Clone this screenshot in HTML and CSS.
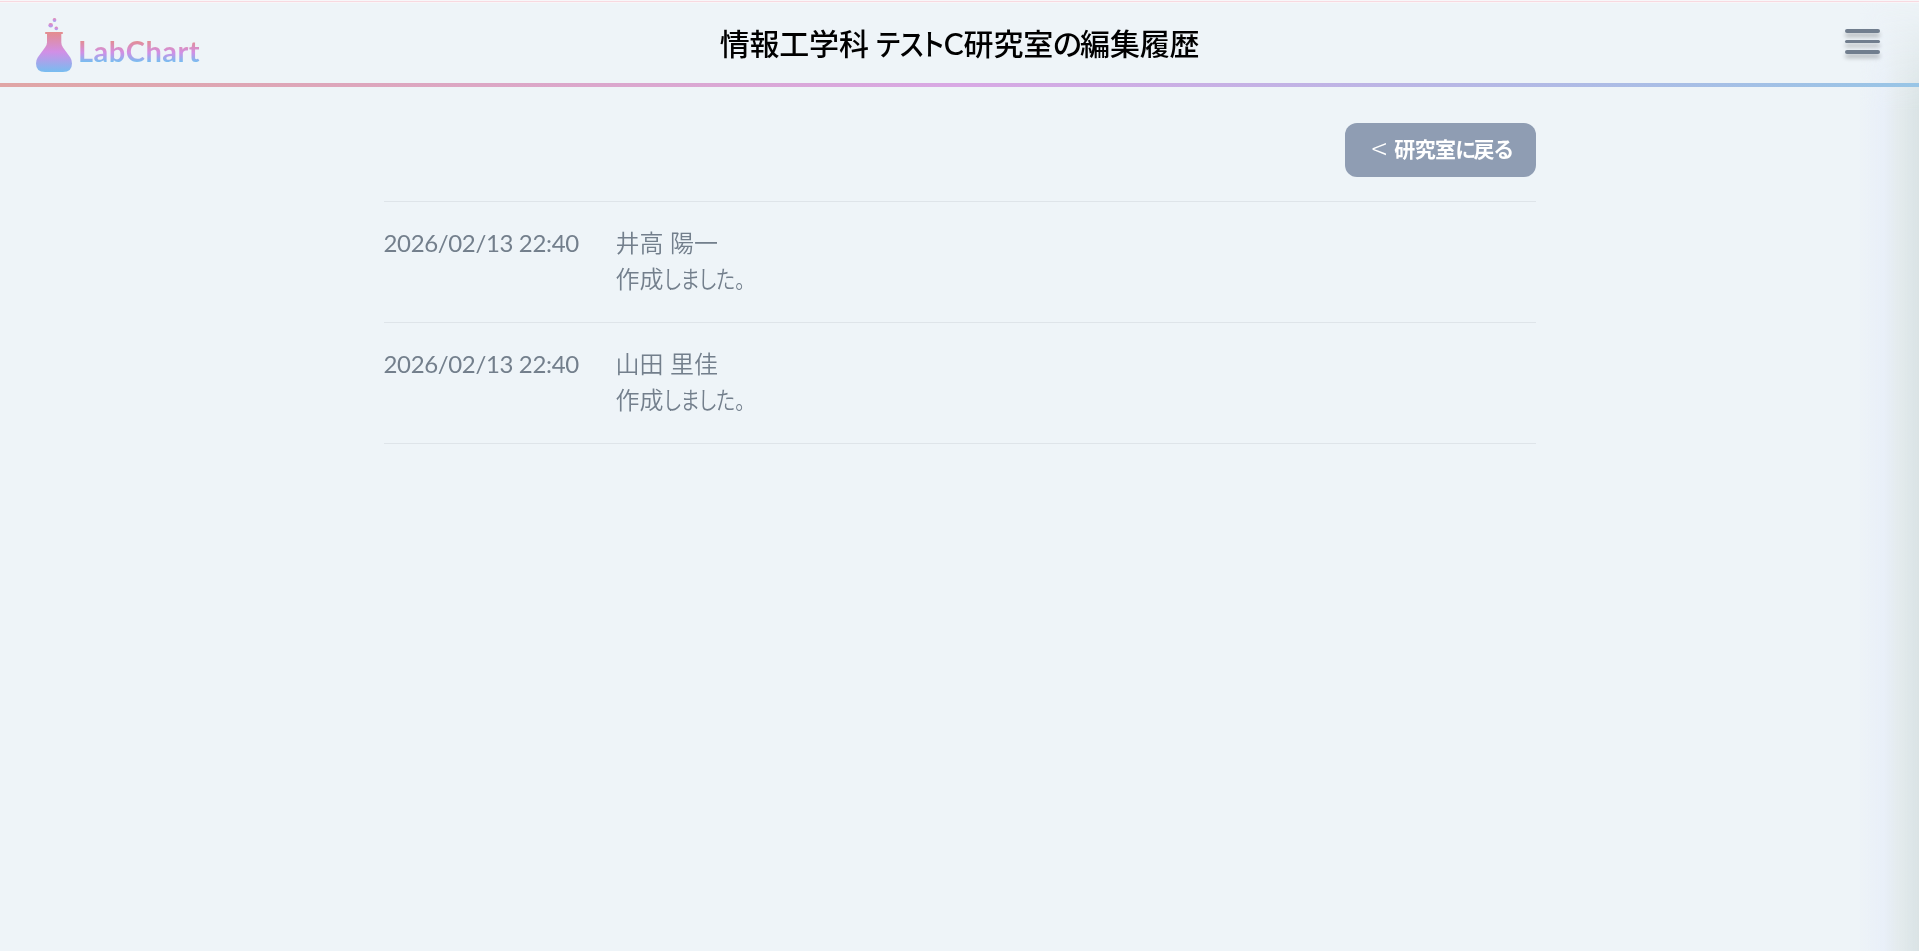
FILE: index.html
```html
<!DOCTYPE html>
<html lang="ja">
<head>
  <meta charset="UTF-8" />
  <meta name="viewport" content="width=device-width, initial-scale=1.0"/>
  <title>編集履歴 - LabChart</title>
  <link rel="stylesheet" href="styles.css">
</head>
<body>

<header class="header">
  <a class="logo" href="#">
    <svg class="logo-mark" viewBox="0 0 36 54" width="36" height="54">
      <defs>
        <linearGradient id="flask" x1="0" y1="0" x2="0" y2="1">
          <stop offset="0" stop-color="#e48d8d"/>
          <stop offset="0.5" stop-color="#d18fe6"/>
          <stop offset="1" stop-color="#77bdf0"/>
        </linearGradient>
        <linearGradient id="bubble" x1="0" y1="0" x2="0" y2="1">
          <stop offset="0" stop-color="#df8da8"/>
          <stop offset="0.5" stop-color="#cf8fe2"/>
          <stop offset="1" stop-color="#9da9ed"/>
        </linearGradient>
      </defs>
      <circle cx="18.5" cy="2" r="1.9" fill="url(#bubble)"/>
      <circle cx="14.7" cy="7.3" r="2.3" fill="url(#bubble)"/>
      <circle cx="20.3" cy="10.4" r="1.8" fill="url(#bubble)"/>
      <path fill="url(#flask)" d="M9.8 14H26.2Q27 14 27 15T26.2 16H25.3V24.5Q25.3 27 27 29.5L34.3 39.5Q36 42 36 45.5Q36 54 27 54H9Q0 54 0 45.5Q0 42 1.7 39.5L9 29.5Q11 27 11 24.5V16H9.8Q9 16 9 15T9.8 14Z"/>
    </svg>
    <span class="logo-text">LabChart</span>
  </a>
  <h1 class="title">情報工学科 <span class="katakana">テスト</span>C研究室<span class="kana">の</span>編集履歴</h1>
  <button class="menu-button" type="button" aria-label="メニュー">
    <span class="bar"></span>
    <span class="bar"></span>
    <span class="bar"></span>
  </button>
</header>

<main class="container">
  <div class="actions">
    <a class="back-button" href="#"><span class="arrow">&lt;</span><span>研究室<span class="kana">に</span>戻る</span></a>
  </div>
  <ul class="history">
    <li class="history-item">
      <time class="date">2026/02/13 22:40</time>
      <div class="detail">
        <p>井高 陽一</p>
        <p>作成<span class="kana">しました。</span></p>
      </div>
    </li>
    <li class="history-item">
      <time class="date">2026/02/13 22:40</time>
      <div class="detail">
        <p>山田 里佳</p>
        <p>作成<span class="kana">しました。</span></p>
      </div>
    </li>
  </ul>
</main>

<!-- closed drawer, only its shadow shows -->
<div class="drawer-shadow"></div>

</body>
</html>
```

FILE: styles.css
```css
* {
  box-sizing: border-box;
}
body {
  font-family: Lato, "Noto Sans CJK JP", sans-serif;
  background-color: #eef4f8;
  color: #737f8c;
  margin: 0;
  min-height: 100vh;
  overflow: hidden;
}
h1, p, ul {
  margin: 0;
  padding: 0;
}
a {
  text-decoration: none;
}
.header {
  display: grid;
  grid-template-columns: 1fr auto 1fr;
  align-items: start;
  height: 87px;
  padding: 0 36px;
  background:
    linear-gradient(#f8f6f9 1px, #f8d9e0 1px 2px, #f8f6f9 2px) top / 100% 3px no-repeat,
    linear-gradient(to right, #e0a5a5, #d8a8e4 50%, #98c5e6) bottom / 100% 4px no-repeat;
}
.logo {
  display: flex;
  align-items: flex-start;
  gap: 6px;
  padding-top: 18px;
}
.logo-text {
  margin-top: 16px;
  font-size: 29px;
  font-weight: 700;
  line-height: 34px;
  letter-spacing: 0.5px;
  background: linear-gradient(#e48d8d 18%, #d18fe6 55%, #77bdf0 82%);
  -webkit-background-clip: text;
  background-clip: text;
  color: transparent;
}
.title {
  padding-top: 21px;
  color: #000;
  font-size: 30px;
  font-weight: 500;
  line-height: 44px;
  letter-spacing: -0.2px;
  font-feature-settings: "palt";
}
.title .katakana {
  display: inline-block;
  margin-right: -9px;
  transform: scaleX(0.88);
  transform-origin: left;
}
.title .kana {
  letter-spacing: -1.8px;
}
.menu-button {
  justify-self: end;
  display: flex;
  flex-direction: column;
  gap: 7px;
  width: 38px;
  margin-top: 29px;
  padding: 0 3px 0 0;
  border: 0;
  background: none;
  cursor: pointer;
}
.bar {
  width: 35px;
  height: 3.5px;
  border-radius: 2px;
  background-color: #717e8e;
  box-shadow: 0 4px 4px rgba(0, 0, 0, 0.25);
}
.container {
  width: 1152px;
  margin: 0 auto;
  padding-top: 36px;
}
.actions {
  display: flex;
  justify-content: flex-end;
  margin-bottom: 24px;
}
.back-button {
  display: flex;
  gap: 8px;
  width: 191px;
  height: 54px;
  padding-left: 27px;
  border-radius: 12px;
  background-color: #8f9db3;
  color: #fff;
  font-size: 21px;
  font-weight: 700;
  line-height: 51px;
  letter-spacing: -0.7px;
  white-space: nowrap;
  font-feature-settings: "palt";
}
.back-button .kana {
  letter-spacing: -2px;
}
.arrow {
  font-family: "Noto Sans CJK JP", sans-serif;
  font-size: 29px;
  font-weight: 300;
  line-height: 49px;
}
.history {
  list-style: none;
  border-top: 1px solid #dee4e9;
}
.history-item {
  display: flex;
  gap: 37px;
  padding: 23px 0 25px;
  border-bottom: 1px solid #dee4e9;
  font-size: 24px;
  line-height: 36px;
}
.date {
  width: 195px;
  letter-spacing: -0.35px;
  white-space: nowrap;
}
.detail {
  font-weight: 350;
  font-feature-settings: "palt";
}
.detail .kana {
  display: inline-block;
  transform: scaleX(0.83);
  transform-origin: left;
}
.drawer-shadow {
  position: fixed;
  z-index: -1;
  top: 0;
  right: 0;
  width: 60px;
  height: 100%;
  background: linear-gradient(to right, rgba(232, 239, 249, 0), rgba(231, 238, 248, 0.8) 40%, rgba(226, 233, 236, 0.85) 65%, rgba(215, 225, 226, 0.9));
  -webkit-mask-image: linear-gradient(transparent, #000 110px);
  mask-image: linear-gradient(transparent, #000 110px);
  pointer-events: none;
}
```
